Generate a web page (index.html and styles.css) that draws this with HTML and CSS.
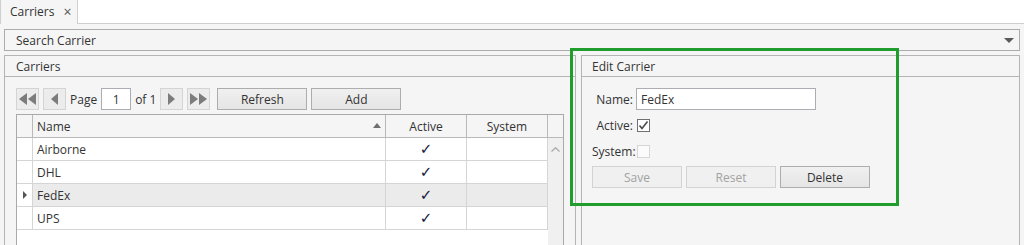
FILE: index.html
```html
<html lang="en"><head>
    <meta charset="UTF-8">
    <title>Carriers</title>
    <link rel="stylesheet" href="styles.css">
  </head>
  <body>
    <!-- Document Tabs -->
    <div class="tabstrip">
      <div class="tab">
        <span>Carriers</span>
        <span class="tab-close">×</span>
      </div>
    </div>

    <div class="workspace">
      <!-- Search Expander -->
      <div class="search-bar">
        <span>Search Carrier</span>
        <span class="dropdown-arrow"></span>
      </div>

      <div class="panels">
        <!-- Carriers List -->
        <section class="panel carriers-panel">
          <div class="panel-header">Carriers</div>
          <div class="panel-body">
            <div class="pager">
              <button class="nav-btn" title="First">
                <svg width="17" height="12" viewBox="0 0 17 12"><polygon points="8,0 0,6 8,12" /><polygon points="17,0 9,6 17,12" /></svg>
              </button>
              <button class="nav-btn" title="Previous">
                <svg width="7" height="12" viewBox="0 0 7 12"><polygon points="7,0 0,6 7,12" /></svg>
              </button>
              <span class="pager-text">Page</span>
              <input class="page-input" type="text" value="1">
              <span class="pager-text">of 1</span>
              <button class="nav-btn" title="Next">
                <svg width="7" height="12" viewBox="0 0 7 12"><polygon points="0,0 7,6 0,12" /></svg>
              </button>
              <button class="nav-btn" title="Last">
                <svg width="17" height="12" viewBox="0 0 17 12"><polygon points="0,0 8,6 0,12" /><polygon points="9,0 17,6 9,12" /></svg>
              </button>
              <button class="btn refresh-btn">Refresh</button>
              <button class="btn">Add</button>
            </div>

            <div class="grid">
              <div class="grid-head">
                <div class="cell row-marker"></div>
                <div class="cell col-name">Name<span class="sort-arrow"></span></div>
                <div class="cell col-active">Active</div>
                <div class="cell col-system">System</div>
                <div class="cell col-scroll"></div>
              </div>
              <div class="grid-body">
                <div class="grid-rows">
                  <div class="grid-row">
                    <div class="cell row-marker"></div>
                    <div class="cell col-name">Airborne</div>
                    <div class="cell col-active"><span class="check">✓</span></div>
                    <div class="cell col-system"></div>
                  </div>
                  <div class="grid-row">
                    <div class="cell row-marker"></div>
                    <div class="cell col-name">DHL</div>
                    <div class="cell col-active"><span class="check">✓</span></div>
                    <div class="cell col-system"></div>
                  </div>
                  <div class="grid-row selected">
                    <div class="cell row-marker"><span class="current-arrow"></span></div>
                    <div class="cell col-name">FedEx</div>
                    <div class="cell col-active"><span class="check">✓</span></div>
                    <div class="cell col-system"></div>
                  </div>
                  <div class="grid-row">
                    <div class="cell row-marker"></div>
                    <div class="cell col-name">UPS</div>
                    <div class="cell col-active"><span class="check">✓</span></div>
                    <div class="cell col-system"></div>
                  </div>
                </div>
                <div class="grid-scroll">
                  <svg width="9" height="5" viewBox="0 0 9 5"><polyline points="0.5,4.5 4.5,0.8 8.5,4.5" /></svg>
                </div>
              </div>
            </div>
          </div>
        </section>

        <!-- Edit Form -->
        <section class="panel edit-panel">
          <div class="panel-header">Edit Carrier</div>
          <div class="panel-body">
            <div class="edit-form">
              <label class="form-label" for="carrierName">Name:</label>
              <input class="text-input" type="text" id="carrierName" value="FedEx">

              <span class="form-label">Active:</span>
              <span class="checkbox">
                <svg width="11" height="11" viewBox="0 0 11 11"><polyline points="1.5,5.5 4,8.5 9.5,1.5" /></svg>
              </span>

              <span class="form-label">System:</span>
              <span class="checkbox disabled"></span>

              <div class="form-actions">
                <button class="btn" disabled>Save</button>
                <button class="btn" disabled>Reset</button>
                <button class="btn">Delete</button>
              </div>
            </div>
          </div>
        </section>
      </div>
    </div>

    <!-- Highlight annotation -->
    <div class="highlight"></div>
  </body></html>
```

FILE: styles.css
```css
/* General Styling */
body {
  margin: 0;
  font-family: "Segoe UI", "Open Sans", sans-serif;
  font-size: 12px;
  color: #333;
  background: #ffffff;
  overflow: hidden;
}

button,
input {
  font-family: inherit;
  font-size: 12px;
  color: #333;
  margin: 0;
}

/* Tabs */
.tabstrip {
  height: 23px;
  border-bottom: 1px solid #cfcfcf;
  display: flex;
}

.tab {
  width: 78px;
  height: 24px;
  box-sizing: border-box;
  border-left: 1px solid #cfcfcf;
  border-right: 1px solid #cfcfcf;
  background: #f5f5f5;
  display: flex;
  align-items: center;
  padding-left: 9px;
  padding-bottom: 2px;
}

.tab-close {
  margin-left: 9px;
  font-size: 14px;
  color: #555;
}

/* Workspace */
.workspace {
  background: #f5f5f5;
  height: 221px;
  box-sizing: border-box;
  padding: 5px 4px 0 4px;
  overflow: hidden;
}

.search-bar {
  height: 22px;
  box-sizing: border-box;
  border: 1px solid #acacac;
  display: flex;
  align-items: center;
  justify-content: space-between;
  padding: 0 5px 0 11px;
}

.dropdown-arrow {
  width: 0;
  height: 0;
  border-left: 5px solid transparent;
  border-right: 5px solid transparent;
  border-top: 5px solid #5a5a5a;
}

.panels {
  display: flex;
  gap: 5px;
  margin-top: 4px;
  height: 200px;
}

/* Panels */
.panel {
  border: 1px solid #b4b4b4;
  border-bottom: none;
  box-sizing: border-box;
  display: flex;
  flex-direction: column;
}

.carriers-panel {
  width: 572px;
}

.edit-panel {
  flex: 1;
}

.panel-header {
  height: 20px;
  border-bottom: 1px solid #b4b4b4;
  display: flex;
  align-items: center;
  padding-left: 11px;
}

.edit-panel .panel-header {
  padding-left: 10px;
}

.panel-body {
  flex: 1;
  display: flex;
  flex-direction: column;
  padding: 11px 11px 0 11px;
}

.edit-panel .panel-body {
  padding-left: 10px;
}

/* Pager */
.pager {
  display: flex;
  align-items: center;
  gap: 4px;
  height: 22px;
}

.nav-btn {
  width: 23px;
  height: 22px;
  padding: 0;
  border: 1px solid #d4d4d4;
  background: #ececec;
  display: flex;
  align-items: center;
  justify-content: center;
}

.nav-btn svg {
  fill: #7c7c7c;
}

.page-input {
  width: 30px;
  height: 22px;
  box-sizing: border-box;
  border: 1px solid #abadb3;
  background: #fff;
  text-align: center;
  padding: 0;
}

.refresh-btn {
  margin-left: 3px;
}

.btn {
  flex: none;
  width: 90px;
  height: 22px;
  padding: 0;
  border: 1px solid #adadad;
  background: linear-gradient(#f0f0f0, #e5e5e5);
  color: #333;
}

.btn:disabled {
  border-color: #d3d3d3;
  background: #f0f0f0;
  color: #a2a2a2;
}

/* Grid */
.grid {
  margin-top: 4px;
  width: 548px;
  flex: 1;
  box-sizing: border-box;
  border: 1px solid #a9a9a9;
  border-bottom: none;
  display: flex;
  flex-direction: column;
  background: #fff;
}

.grid-head {
  display: flex;
  height: 23px;
  box-sizing: border-box;
  border-bottom: 1px solid #b9b9b9;
  background: #f5f5f5;
}

.cell {
  box-sizing: border-box;
  display: flex;
  align-items: center;
  border-right: 1px solid #d5d5d5;
}

.grid-head .cell {
  border-right-color: #b9b9b9;
}

.row-marker {
  width: 16px;
  justify-content: center;
}

.col-name {
  width: 353px;
  padding-left: 4px;
  position: relative;
}

.col-active,
.col-system {
  width: 81px;
  justify-content: center;
}

.grid-head .col-scroll {
  flex: 1;
  border-right: none;
}

.sort-arrow {
  position: absolute;
  right: 4px;
  top: 8px;
  width: 0;
  height: 0;
  border-left: 4px solid transparent;
  border-right: 4px solid transparent;
  border-bottom: 5px solid #6e6e6e;
}

.grid-body {
  flex: 1;
  display: flex;
}

.grid-rows {
  width: 531px;
}

.grid-row {
  display: flex;
  height: 23px;
  box-sizing: border-box;
  border-bottom: 1px solid #d5d5d5;
}

.grid-row.selected .col-name,
.grid-row.selected .col-active,
.grid-row.selected .col-system {
  background: #ebebeb;
}

.current-arrow {
  width: 0;
  height: 0;
  border-top: 4px solid transparent;
  border-bottom: 4px solid transparent;
  border-left: 4px solid #555;
}

.check {
  font-family: "DejaVu Sans", sans-serif;
  font-size: 15px;
  color: #15193a;
}

.grid-scroll {
  flex: 1;
  background: #f0f0f0;
  display: flex;
  justify-content: center;
  padding-top: 9px;
}

.grid-scroll svg {
  fill: none;
  stroke: #b0b0b0;
  stroke-width: 1.5;
}

/* Edit Form */
.edit-form {
  display: grid;
  grid-template-columns: 41px 180px;
  grid-auto-rows: 22px;
  column-gap: 3px;
  row-gap: 4px;
  align-items: center;
}

.form-label {
  text-align: right;
  white-space: nowrap;
}

.text-input {
  width: 180px;
  height: 22px;
  box-sizing: border-box;
  border: 1px solid #abadb3;
  background: #fff;
  padding: 0 0 0 4px;
}

.checkbox {
  width: 13px;
  height: 13px;
  margin-left: 1px;
  box-sizing: border-box;
  border: 1px solid #707070;
  background: #fff;
  display: flex;
  align-items: center;
  justify-content: center;
}

.checkbox svg {
  fill: none;
  stroke: #4a4a4a;
  stroke-width: 1.6;
}

.checkbox.disabled {
  border-color: #d6d6d6;
  background: #fbfbfb;
}

.form-actions {
  grid-column: 1 / -1;
  display: flex;
  gap: 4px;
}

/* Annotation frame */
.highlight {
  position: absolute;
  left: 570px;
  top: 48px;
  width: 329px;
  height: 158px;
  box-sizing: border-box;
  border: 3px solid #1f9e2e;
}
```
